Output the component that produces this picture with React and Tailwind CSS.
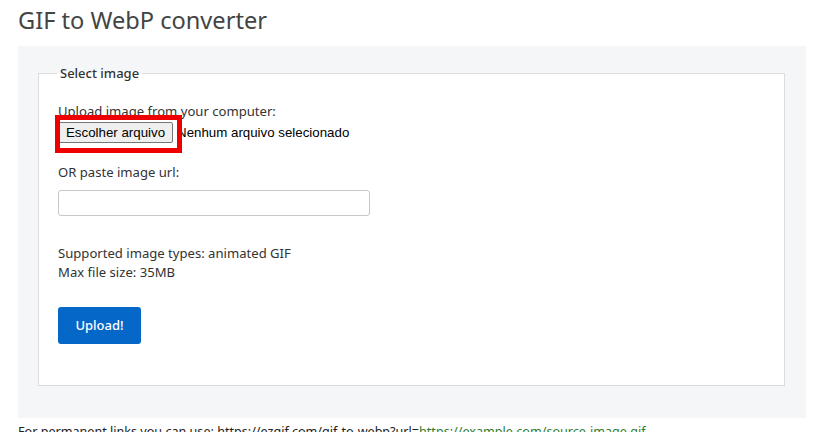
export default function App() {
  return (
    <div
      className="w-[820px] h-[432px] overflow-hidden bg-white text-[#333]"
      style={{ fontFamily: '"Noto Sans", "Open Sans", sans-serif' }}
    >
      <h1 className="ml-[18px] h-[46px] pt-[3px] text-[23.6px] leading-[34px] font-normal text-[#444]">
        GIF to WebP converter
      </h1>
      <div className="ml-[18px] w-[788px] bg-[#f5f6f7] pt-[18px] pl-[20px] pr-[21px] pb-[32px]">
        <fieldset className="relative border border-[#dadcdf] bg-white pl-[19px] pr-[19px] pt-[20px] pb-[41px] text-[13.1px] leading-[19px]">
          <legend className="ml-[-1px] px-[3px] text-[13px] leading-[18px] font-medium text-[#333]">
            Select image
          </legend>
          <p>Upload image from your computer:</p>
          <div
            className="mt-[1px] flex h-[21px] items-center text-[13.3px]"
            style={{ fontFamily: '"Liberation Sans", Arial, sans-serif' }}
          >
            <button className="h-[21px] rounded-[2px] border border-[#767676] bg-[#efefef] px-[7px] text-[13.3px] leading-[19px] text-black">
              Escolher arquivo
            </button>
            <span className="ml-[4px] text-black">Nenhum arquivo selecionado</span>
          </div>
          <div className="pointer-events-none absolute left-[16px] top-[33px] h-[38px] w-[127px] border-[5px] border-[#ee0000]" />
          <p className="mt-[20px]">OR paste image url:</p>
          <input
            type="text"
            className="mt-[8px] block h-[26px] w-[312px] rounded-[3px] border border-[#c4c7cc] bg-white"
          />
          <p className="mt-[28px]">Supported image types: animated GIF</p>
          <p>Max file size: 35MB</p>
          <button className="mt-[25px] block h-[37px] w-[83px] rounded-[3px] bg-[#0567c8] text-[13px] font-medium text-white">
            Upload!
          </button>
        </fieldset>
      </div>
      <p className="ml-[18px] mt-[4px] text-[12.6px] leading-[19px] text-[#222] whitespace-nowrap">
        For permanent links you can use: https://ezgif.com/gif-to-webp?url=
        <span className="text-[#2e7d32]">https://example.com/source-image.gif</span>
      </p>
    </div>
  );
}
